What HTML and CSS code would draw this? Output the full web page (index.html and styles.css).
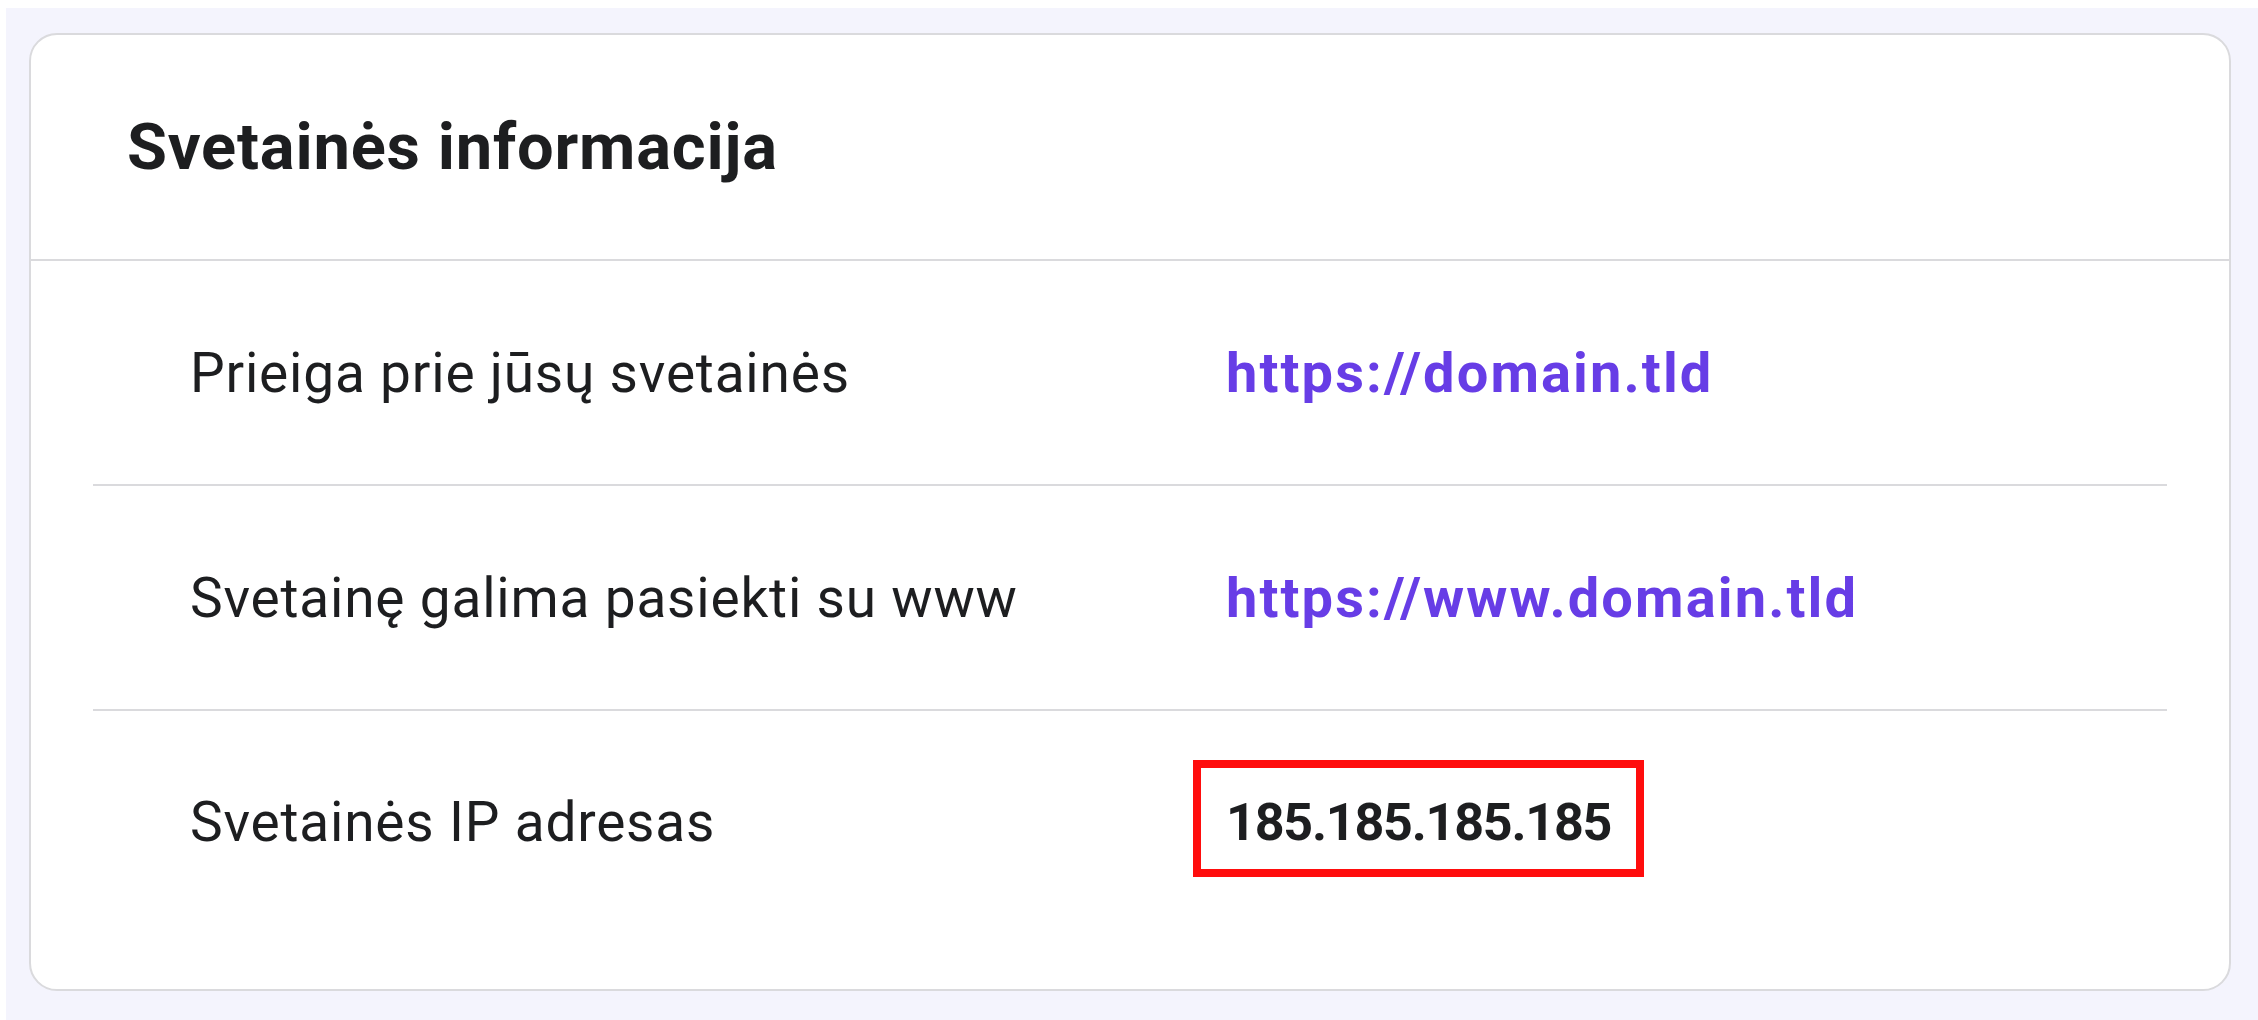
FILE: index.html
```html
<!DOCTYPE html>
<html lang="lt">
<head>
<meta charset="utf-8">
<title>Svetainės informacija</title>
<link rel="stylesheet" href="styles.css">
</head>
<body>
<main class="page">
  <section class="card">
    <header class="card-header">
      <h2 class="card-title">Svetainės informacija</h2>
    </header>
    <div class="info-list">
      <div class="info-row">
        <span class="info-label">Prieiga prie jūsų svetainės</span>
        <a class="info-link" href="#">https://domain.tld</a>
      </div>
      <div class="info-row">
        <span class="info-label">Svetainę galima pasiekti su www</span>
        <a class="info-link" href="#">https://www.domain.tld</a>
      </div>
      <div class="info-row">
        <span class="info-label">Svetainės IP adresas</span>
        <span class="info-value"><span class="highlight">185.185.185.185</span></span>
      </div>
    </div>
  </section>
</main>
</body>
</html>
```
FILE: styles.css
```css
html, body {
  margin: 0;
  padding: 0;
  background: #ffffff;
}

body {
  font-family: Roboto, "Noto Sans", "Liberation Sans", sans-serif;
  color: #1d1e20;
}

.page {
  margin: 8px 0 0 6px;
  height: 1012px;
  background: #f4f4fd;
  padding: 25px 27px 0 23px;
  box-sizing: border-box;
}

.card {
  background: #ffffff;
  border: 2px solid #dadadd;
  border-radius: 28px;
  height: 958px;
  box-sizing: border-box;
  display: flex;
  flex-direction: column;
}

.card-header {
  height: 224px;
  border-bottom: 2px solid #dadadd;
  display: flex;
  align-items: center;
  padding-left: 96px;
}

.card-title {
  margin: 0;
  font-size: 65px;
  font-weight: 700;
  letter-spacing: 0.8px;
}

.info-list {
  padding: 0 62px;
}

.info-row {
  display: grid;
  grid-template-columns: 1036px 1fr;
  align-items: center;
  height: 223px;
  padding-left: 97px;
  border-bottom: 2px solid #dadadd;
}

.info-row:last-child {
  border-bottom: none;
  height: 222px;
}

.info-label {
  font-size: 55px;
  font-weight: 400;
  letter-spacing: 0.8px;
}

.info-link,
.info-value {
  font-weight: 700;
  text-decoration: none;
}

.info-link {
  color: #673de6;
  font-size: 56px;
  letter-spacing: 2.1px;
}

.info-value {
  color: #1d1e20;
  font-size: 52px;
  letter-spacing: -1.2px;
}

/* red outline drawn around the IP address */
.highlight {
  position: relative;
}

.highlight::after {
  content: "";
  position: absolute;
  top: -32px;
  bottom: -24px;
  left: -33px;
  right: -33px;
  border: 8px solid #ff0d0d;
}
```
